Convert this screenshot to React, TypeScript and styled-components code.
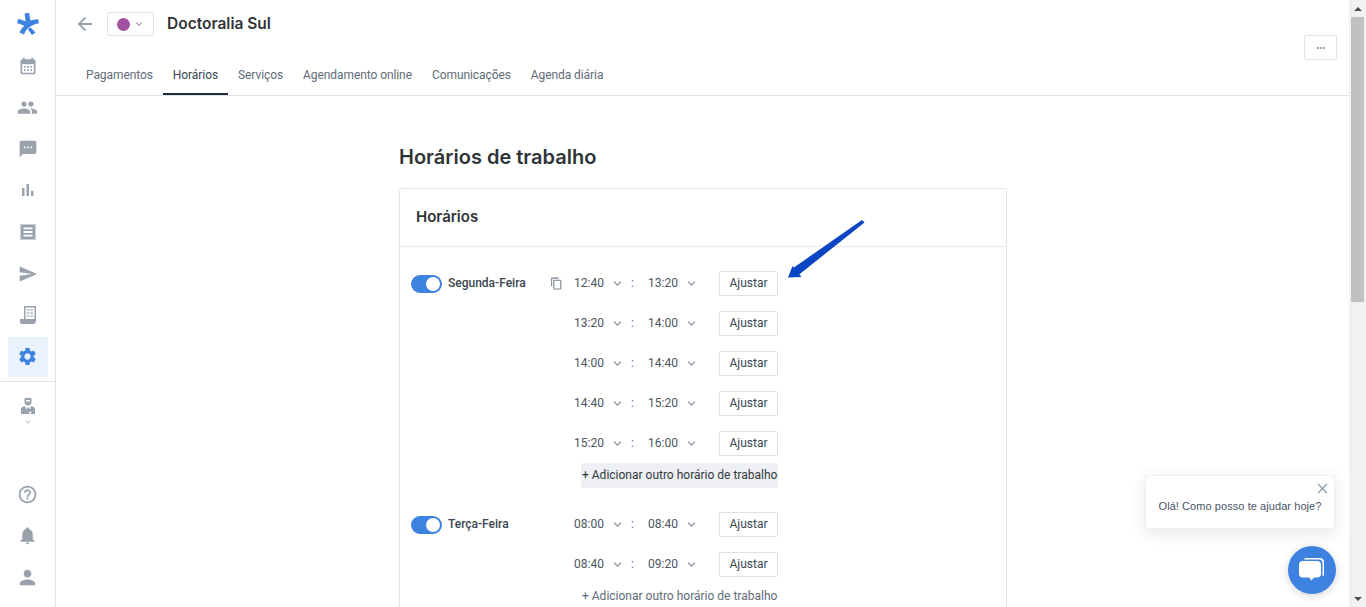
import styled, { createGlobalStyle } from "styled-components";
import {
  MdArrowBack,
  MdCalendarMonth,
  MdClose,
  MdHelpOutline,
  MdKeyboardArrowDown,
  MdMoreHoriz,
  MdNotifications,
  MdOutlineContentCopy,
  MdPeople,
  MdPerson,
  MdSend,
  MdSettings,
  MdSms,
} from "react-icons/md";

const GlobalStyle = createGlobalStyle`
  * { box-sizing: border-box; }
  html, body { margin: 0; height: 100%; overflow: hidden; background: #fff; }
  body { font-family: Roboto, "Liberation Sans", sans-serif; color: #2f3840; }
`;

const Logo = () => (
  <svg width="24" height="24" viewBox="0 0 24 24" fill="#3d82e0">
    <path d="M8.500 1.500 13 .8 14.500 8.500 22 7l1 4.200C17 12.500 10.500 15 8 22.500L3.500 20.500C4.800 17.500 6.500 15.500 8.500 13.800L1 11 2.500 6.700 9.700 9.300z" />
    <path d="M14.500 15.200 19.500 20.500 16 23 11.800 17.300z" />
  </svg>
);

const BarsIcon = () => (
  <svg width="20" height="20" viewBox="0 0 20 20" fill="currentColor">
    <path d="M4 8h2.500v8H4zM8.500 4H11v12H8.500zM13 11h2.500v5H13z" />
  </svg>
);

const ReceiptIcon = () => (
  <svg width="16" height="16" viewBox="0 0 16 16" fill="currentColor">
    <path d="M1 1h14v14H1zM3.500 3.500v1.800h9V3.500zm0 3.600v1.800h9V7.100zm0 3.600v1.800h9v-1.800z" fillRule="evenodd" />
    <rect x=".5" y=".5" width="15" height="15" fill="none" stroke="currentColor" strokeDasharray="1 1" />
  </svg>
);

const LedgerIcon = () => (
  <svg width="16" height="18" viewBox="0 0 16 18" fill="currentColor">
    <path d="M4 0h12v15c0 1.500-1 3-2.500 3H1.500C.5 18 0 17 0 16v-3h4zM5.500 1.500V13h9V1.500z" fillRule="evenodd" />
    <path d="M6.800 3h2.600v2H6.800zM10.400 3H13v2h-2.600zM6.800 6h2.600v2H6.800zM10.400 6H13v2h-2.600zM6.800 9h2.600v2H6.800zM10.400 9H13v2h-2.600z" opacity=".6" />
  </svg>
);

const DoctorIcon = () => (
  <svg width="14" height="17" viewBox="0 0 14 17" fill="currentColor">
    <path d="M3.500 1.500C4.500.5 9.500.5 10.500 1.500V5c0 2-1.500 3.500-3.500 3.500S3.500 7 3.500 5zM5 3v1.500h4V3z" fillRule="evenodd" />
    <path d="M0 12c0-1.500 1.500-2.500 4-3l1 3.500L7 10l2 2.500L10 9c2.500.5 4 1.500 4 3v5H9.500l1-2-1.500-1-1 3H0z" />
  </svg>
);

const navItems = [
  <MdCalendarMonth size={20} />,
  <MdPeople size={21} />,
  <MdSms size={20} />,
  <BarsIcon />,
  <ReceiptIcon />,
  <MdSend size={20} />,
  <LedgerIcon />,
];

const schedule = [
  {
    day: "Segunda-Feira",
    highlighted: true,
    slots: [
      ["12:40", "13:20"],
      ["13:20", "14:00"],
      ["14:00", "14:40"],
      ["14:40", "15:20"],
      ["15:20", "16:00"],
    ],
  },
  {
    day: "Terça-Feira",
    highlighted: false,
    slots: [
      ["08:00", "08:40"],
      ["08:40", "09:20"],
    ],
  },
];

const tabs = ["Pagamentos", "Horários", "Serviços", "Agendamento online", "Comunicações", "Agenda diária"];

const App = () => {
  return (
    <Page>
      <GlobalStyle />
      <Sidebar>
        <NavItem $logo>
          <Logo />
        </NavItem>
        {navItems.map((icon, i) => (
          <NavItem key={i}>{icon}</NavItem>
        ))}
        <NavItem>
          <ActiveBox>
            <MdSettings size={21} />
          </ActiveBox>
        </NavItem>
        <SideDivider />
        <DoctorItem>
          <DoctorIcon />
          <MdKeyboardArrowDown size={10} />
        </DoctorItem>
        <SideBottom>
          <NavItem>
            <MdHelpOutline size={21} />
          </NavItem>
          <NavItem>
            <MdNotifications size={21} />
          </NavItem>
          <NavItem>
            <MdPerson size={23} />
          </NavItem>
        </SideBottom>
      </Sidebar>

      <Main>
        <Header>
          <HeaderLeft>
            <HeaderTop>
              <BackIcon>
                <MdArrowBack size={22} />
              </BackIcon>
              <ColorSelect>
                <ColorDot />
                <MdKeyboardArrowDown size={12} />
              </ColorSelect>
              <HeaderTitle>Doctoralia Sul</HeaderTitle>
            </HeaderTop>
            <Tabs>
              {tabs.map((tab) => (
                <Tab key={tab} $active={tab === "Horários"}>
                  {tab}
                </Tab>
              ))}
            </Tabs>
          </HeaderLeft>
          <MoreButton>
            <MdMoreHoriz size={12} />
          </MoreButton>
        </Header>

        <Content>
          <PageTitle>Horários de trabalho</PageTitle>
          <Card>
            <CardHead>Horários</CardHead>
            <CardBody>
              {schedule.map((entry) => (
                <DayBlock key={entry.day}>
                  {entry.slots.map(([from, to], i) => (
                    <SlotRow key={from}>
                      <DayCell>
                        {i === 0 && (
                          <>
                            <Toggle />
                            <DayName>{entry.day}</DayName>
                          </>
                        )}
                      </DayCell>
                      <CopyCell>
                        {i === 0 && entry.highlighted && <MdOutlineContentCopy size={13} />}
                      </CopyCell>
                      <TimeSelect>
                        <TimeText>{from}</TimeText>
                        <MdKeyboardArrowDown size={15} />
                      </TimeSelect>
                      <Colon>:</Colon>
                      <TimeSelect>
                        <TimeText>{to}</TimeText>
                        <MdKeyboardArrowDown size={15} />
                      </TimeSelect>
                      <AdjustButton>Ajustar</AdjustButton>
                    </SlotRow>
                  ))}
                  <AddLink $hover={entry.highlighted}>+ Adicionar outro horário de trabalho</AddLink>
                </DayBlock>
              ))}
            </CardBody>
          </Card>
          <Arrow width="80" height="60" viewBox="0 0 80 60">
            <path d="M74 0 76.500 2.500 10.500 55 4.500 48.500z" fill="#0b45c4" />
            <path d="M0 57.500 4.500 46 13.500 57z" fill="#0b45c4" />
          </Arrow>
        </Content>
      </Main>

      <Scrollbar>
        <ScrollButton>
          <ArrowUp />
        </ScrollButton>
        <ScrollTrack>
          <ScrollThumb />
        </ScrollTrack>
        <ScrollButton>
          <ArrowDown />
        </ScrollButton>
      </Scrollbar>

      <ChatPopup>
        <ChatClose>
          <MdClose size={17} />
        </ChatClose>
        Olá! Como posso te ajudar hoje?
      </ChatPopup>
      <ChatButton>
        <svg width="30" height="30" viewBox="0 0 30 30" fill="#fff">
          <path d="M9 3h14c2 0 4 1.500 4 4v12c0 1-.5 2-1.500 2.500V8c0-2.200-1.300-3.500-3.500-3.500H7C7.300 3.500 8 3 9 3z" />
          <path d="M5.500 6h15c2 0 3.500 1.500 3.500 3.500V19c0 2-1.500 3.500-3.500 3.500H17L14.500 25.500 12 22.500H5.500C3.500 22.500 2 21 2 19V9.500C2 7.500 3.500 6 5.500 6z" />
        </svg>
      </ChatButton>
    </Page>
  );
};

const Page = styled.div`
  position: relative;
  display: flex;
  width: 100%;
  height: 100vh;
  overflow: hidden;
`;

const Sidebar = styled.nav`
  width: 56px;
  flex-shrink: 0;
  display: flex;
  flex-direction: column;
  padding: 3.3px 0 9px;
  border-right: 1px solid #dfe1e5;
  color: #98a1ac;
`;

const NavItem = styled.div<{ $logo?: boolean }>`
  height: 41.6px;
  display: flex;
  align-items: center;
  justify-content: center;
  color: ${(p) => (p.$logo ? "#3d82e0" : "inherit")};
`;

const ActiveBox = styled.div`
  width: 40px;
  height: 40px;
  border-radius: 2px;
  background: #eaf2fd;
  color: #3d82e0;
  display: flex;
  align-items: center;
  justify-content: center;
`;

const SideDivider = styled.div`
  height: 1px;
  margin-top: 3px;
  background: #dfe1e5;
`;

const DoctorItem = styled.div`
  height: 38px;
  margin-top: 15px;
  display: flex;
  flex-direction: column;
  align-items: center;
  svg:last-child {
    color: #b6bcc4;
    margin-top: 3px;
  }
`;

const SideBottom = styled.div`
  margin-top: auto;
`;

const Main = styled.div`
  flex: 1;
  min-width: 0;
  display: flex;
  flex-direction: column;
`;

const Header = styled.header`
  height: 96px;
  flex-shrink: 0;
  display: flex;
  justify-content: space-between;
  border-bottom: 1px solid #dfe1e5;
`;

const HeaderLeft = styled.div`
  display: flex;
  flex-direction: column;
  justify-content: space-between;
  padding-left: 20px;
  padding-top: 12px;
`;

const HeaderTop = styled.div`
  display: flex;
  align-items: center;
  height: 24px;
`;

const BackIcon = styled.div`
  width: 31px;
  display: flex;
  align-items: center;
  color: #98a1ac;
  svg {
    margin-left: -2px;
  }
`;

const ColorSelect = styled.div`
  width: 47px;
  height: 24px;
  border: 1px solid #dfe1e5;
  border-radius: 2px;
  display: flex;
  align-items: center;
  justify-content: center;
  gap: 3px;
  color: #8b94a0;
`;

const ColorDot = styled.span`
  width: 13px;
  height: 13px;
  border-radius: 50%;
  background: #a0519f;
`;

const HeaderTitle = styled.h1`
  margin: 0 0 1px 13px;
  font-family: Inter, "Open Sans", sans-serif;
  font-size: 15.500px;
  font-weight: 600;
  color: #2f3437;
`;

const Tabs = styled.div`
  display: flex;
`;

const Tab = styled.div<{ $active?: boolean }>`
  height: 39px;
  padding: 0 10px;
  display: flex;
  align-items: center;
  font-size: 12px;
  letter-spacing: -0.08px;
  color: ${(p) => (p.$active ? "#3a4652" : "#5f6b78")};
  border-bottom: 2px solid ${(p) => (p.$active ? "#1f2d3d" : "transparent")};
`;

const MoreButton = styled.div`
  width: 33px;
  height: 25px;
  margin: 35px 12px 0 0;
  border: 1px solid #dfe1e5;
  border-radius: 2px;
  display: flex;
  align-items: center;
  justify-content: center;
  color: #8b94a0;
`;

const Content = styled.main`
  position: relative;
  flex: 1;
  min-height: 0;
  overflow: hidden;
  padding: 47px 0 0 343px;
`;

const PageTitle = styled.h2`
  margin: 0;
  height: 29px;
  line-height: 28px;
  font-family: Inter, "Open Sans", sans-serif;
  font-size: 20px;
  font-weight: 600;
  color: #2f3437;
`;

const Card = styled.section`
  width: 608px;
  margin-top: 16px;
  border: 1px solid #e4e6ea;
  border-radius: 3px;
`;

const CardHead = styled.div`
  height: 58px;
  padding: 0 0 2px 16px;
  display: flex;
  align-items: center;
  border-bottom: 1px solid #e8eaed;
  font-family: Inter, "Open Sans", sans-serif;
  font-size: 15px;
  font-weight: 600;
  color: #2f3437;
`;

const CardBody = styled.div`
  display: flex;
  flex-direction: column;
  gap: 24px;
  padding: 24px 0 0 11px;
`;

const DayBlock = styled.div`
  display: flex;
  flex-direction: column;
  gap: 15px;
`;

const SlotRow = styled.div`
  display: flex;
  align-items: center;
  height: 25px;
`;

const DayCell = styled.div`
  width: 140px;
  display: flex;
  align-items: center;
  gap: 6px;
`;

const Toggle = styled.span`
  position: relative;
  width: 31px;
  height: 18px;
  border-radius: 9px;
  background: #3d82e0;
  &::after {
    content: "";
    position: absolute;
    right: 2px;
    top: 2px;
    width: 14px;
    height: 14px;
    border-radius: 50%;
    background: #fff;
  }
`;

const DayName = styled.span`
  padding-bottom: 1.5px;
  font-size: 12px;
  font-weight: 500;
  color: #3a4652;
`;

const CopyCell = styled.div`
  width: 23px;
  display: flex;
  color: #7c8792;
  svg {
    margin-left: -1px;
  }
`;

const TimeSelect = styled.div`
  width: 50px;
  display: flex;
  align-items: center;
  justify-content: space-between;
  color: #8b94a0;
  svg {
    margin-right: -1px;
  }
`;

const TimeText = styled.span`
  padding-bottom: 1.5px;
  font-size: 12px;
  color: #4a5560;
`;

const Colon = styled.span`
  width: 24px;
  padding: 0 0 1.5px 7px;
  font-size: 12px;
  color: #6a5f80;
`;

const AdjustButton = styled.div`
  width: 59px;
  height: 25px;
  margin-left: 21px;
  padding-bottom: 1.5px;
  border: 1px solid #dfe1e5;
  border-radius: 2px;
  display: flex;
  align-items: center;
  justify-content: center;
  font-size: 12px;
  color: #3a4652;
`;

const AddLink = styled.div<{ $hover?: boolean }>`
  width: 197px;
  height: 25px;
  margin: -8px 0 0 170px;
  padding: 0 0 1.5px 1px;
  display: flex;
  align-items: center;
  white-space: nowrap;
  border-radius: 2px;
  font-size: 12px;
  color: ${(p) => (p.$hover ? "#2f3840" : "#5f6b78")};
  background: ${(p) => (p.$hover ? "#eff0f3" : "transparent")};
`;

const Arrow = styled.svg`
  position: absolute;
  left: 732px;
  top: 124px;
`;

const Scrollbar = styled.div`
  width: 17px;
  flex-shrink: 0;
  display: flex;
  flex-direction: column;
  background: #f1f1f1;
`;

const ScrollButton = styled.div`
  height: 17px;
  flex-shrink: 0;
  display: flex;
  align-items: center;
  justify-content: center;
`;

const ArrowUp = styled.span`
  border-left: 4px solid transparent;
  border-right: 4px solid transparent;
  border-bottom: 4px solid #505050;
`;

const ArrowDown = styled.span`
  border-left: 4px solid transparent;
  border-right: 4px solid transparent;
  border-top: 4px solid #505050;
`;

const ScrollTrack = styled.div`
  flex: 1;
  padding: 0 2px;
`;

const ScrollThumb = styled.div`
  height: 285px;
  background: #c1c1c1;
`;

const ChatPopup = styled.div`
  position: absolute;
  left: 1145px;
  top: 475px;
  width: 190px;
  height: 54px;
  padding-top: 24px;
  text-align: center;
  background: #fff;
  border: 1px solid #eef0f4;
  border-radius: 3px;
  box-shadow: 0 4px 16px rgba(40, 50, 70, 0.12);
  font-family: "Liberation Sans", Arial, sans-serif;
  font-size: 11px;
  letter-spacing: 0.07px;
  color: #4a5568;
`;

const ChatClose = styled.span`
  position: absolute;
  right: 3px;
  top: 4px;
  color: #8fa0b5;
  display: flex;
`;

const ChatButton = styled.div`
  position: absolute;
  left: 1288px;
  top: 546px;
  width: 48px;
  height: 48px;
  border-radius: 50%;
  background: #3d82e0;
  box-shadow: 0 2px 8px rgba(40, 50, 70, 0.2);
  display: flex;
  align-items: center;
  justify-content: center;
`;

export default App;
